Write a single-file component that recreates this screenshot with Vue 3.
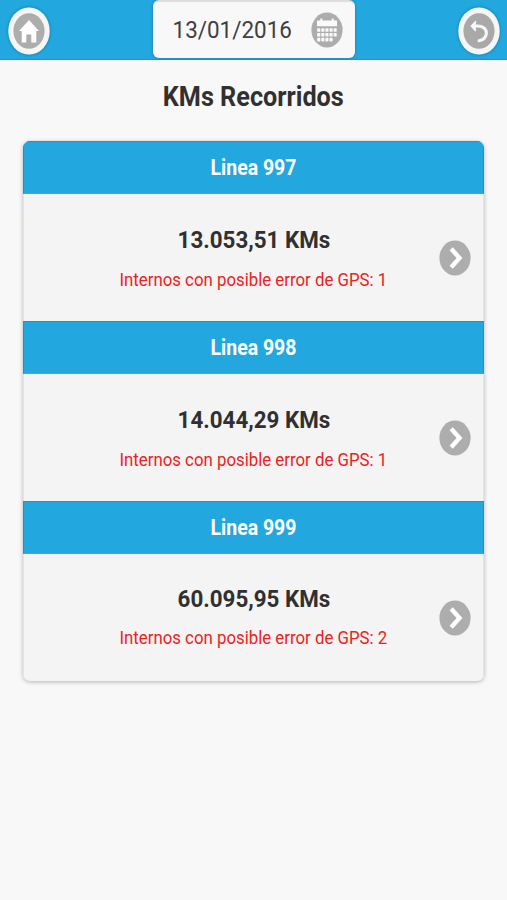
<template>
  <div class="page">
    <header class="top-bar">
      <button class="round-btn" aria-label="Inicio">
        <svg width="42" height="48" viewBox="0 0 42 48">
          <ellipse cx="21" cy="24" rx="20.7" ry="23.6" fill="#f6f6f6" />
          <ellipse cx="21" cy="24" rx="15.6" ry="17.8" fill="#adadad" />
          <path d="M21 13 L31 24 H28.3 V35.4 H23.3 V27.5 H18.3 V35.4 H13.7 V24 H11 Z" fill="#fff" />
        </svg>
      </button>
      <div class="date-box">
        <span class="date"><span class="narrow">{{ date }}</span></span>
        <svg width="32" height="36" viewBox="0 0 32 36">
          <ellipse cx="16" cy="18" rx="15.6" ry="17.5" fill="#adadad" />
          <path d="M6 8.5 H9.3 V6.5 H11.3 V8.5 H20.7 V6.5 H22.7 V8.5 H26 V14.3 H6 Z" fill="#fafafa" />
          <rect v-for="c in cells" :key="c.id" :x="c.x" :y="c.y" width="3.1" height="3.6" rx="0.6" fill="#fafafa" />
        </svg>
      </div>
      <button class="round-btn" aria-label="Volver">
        <svg width="42" height="48" viewBox="0 0 42 48">
          <ellipse cx="21" cy="24" rx="20.7" ry="23.6" fill="#f6f6f6" />
          <ellipse cx="21" cy="24" rx="15.6" ry="17.8" fill="#a9a9a9" />
          <path d="M15.5 19 H20 C25.5 19 29 22.5 28.3 27 C27.7 31 25 33 21 33.7" fill="none" stroke="#f8f8f8" stroke-width="3" stroke-linecap="round" />
          <path d="M18 14.2 L13.3 19 L17.8 24" fill="#f8f8f8" stroke="#f8f8f8" stroke-width="1.5" stroke-linejoin="round" />
        </svg>
      </button>
    </header>

    <h1 class="title"><span class="narrow">KMs Recorridos</span></h1>

    <div class="list">
      <section v-for="l in lineas" :key="l.numero" class="linea">
        <h2 class="linea-header"><span class="narrow">Linea {{ l.numero }}</span></h2>
        <div class="linea-body">
          <div class="info">
            <p class="kms"><span class="narrow">{{ l.kms }} KMs</span></p>
            <p class="error"><span class="narrow">Internos con posible error de GPS: {{ l.errores }}</span></p>
          </div>
          <svg class="arrow" width="32" height="36" viewBox="0 0 32 36">
            <ellipse cx="16" cy="18" rx="15.6" ry="17.5" fill="#adadad" />
            <path d="M12.2 8.8 L20.5 18 L12.2 27.2" fill="none" stroke="#fff" stroke-width="4.4" />
          </svg>
        </div>
      </section>
    </div>
  </div>
</template>

<script setup>
const date = '13/01/2016'

const lineas = [
  { numero: 997, kms: '13.053,51', errores: 1 },
  { numero: 998, kms: '14.044,29', errores: 1 },
  { numero: 999, kms: '60.095,95', errores: 2 }
]

// calendar grid: 5 columns, last row is one cell shorter
const cells = []
for (let row = 0; row < 3; row++) {
  for (let col = 0; col < (row === 2 ? 4 : 5); col++) {
    cells.push({ id: row * 5 + col, x: 6.2 + col * 4.1, y: 16.2 + row * 4.8 })
  }
}
</script>

<style>
body {
  margin: 0;
  background: #f8f8f8;
}
</style>

<style scoped>
.page {
  min-height: 900px;
  font-family: Roboto, 'Liberation Sans', sans-serif;
  color: #303030;
  background: #f8f8f8;
}

.top-bar {
  box-sizing: border-box;
  display: flex;
  justify-content: space-between;
  align-items: flex-start;
  height: 60px;
  padding: 0 7px 0 8px;
  background: #22a7df;
  border-bottom: 1px solid #2290d5;
}

.round-btn {
  display: block;
  margin-top: 7px;
  padding: 0;
  width: 42px;
  height: 48px;
  border: none;
  border-radius: 50%;
  background: none;
  box-shadow: 0 0 3px rgba(0, 0, 0, 0.28);
}

.round-btn svg { display: block; }

.date-box {
  box-sizing: border-box;
  display: flex;
  align-items: center;
  justify-content: space-between;
  width: 202px;
  height: 58px;
  padding: 0 12px 1px 19px;
  background: #f8f8f8;
  border-top: 2px solid #ddd;
  border-radius: 6px;
  box-shadow: 0 0 3px rgba(0, 0, 0, 0.3);
}

.date {
  width: 120px;
  font-size: 24.5px;
  color: #404040;
  display: flex;
  justify-content: center;
}

/* the type is set slightly condensed */
.narrow {
  display: inline-block;
  white-space: nowrap;
  transform: scaleX(0.885);
}

.date .narrow { transform: scaleX(0.915); }

.title {
  margin: 0;
  height: 81px;
  line-height: 73px;
  font-size: 28.5px;
  font-weight: 700;
  text-align: center;
}

.list {
  margin: 0 23px;
  border-radius: 7px;
  overflow: hidden;
  background: #f4f4f4;
  box-shadow: 0 1px 4px rgba(0, 0, 0, 0.28);
}

.linea-header {
  box-sizing: border-box;
  margin: 0;
  height: 53px;
  line-height: 51px;
  font-size: 22px;
  font-weight: 700;
  text-align: center;
  color: #fff;
  background: #22a7df;
  border: 1px solid #2290d5;
  border-bottom-color: #38acdf;
}

.linea-body {
  box-sizing: border-box;
  display: grid;
  grid-template-columns: 44px 1fr 44px;
  align-items: center;
  height: 127px;
  border: 1px solid #e4e4e4;
  border-width: 0 1px;
}

.info {
  grid-column: 2;
  padding-top: 5px;
  text-align: center;
}

.kms {
  margin: 0 0 10px;
  line-height: 30px;
  font-size: 24px;
  font-weight: 700;
}

.kms .narrow { transform: scaleX(0.932); }

.error {
  margin: 0;
  line-height: 30px;
  font-size: 19px;
  color: #f02020;
}

.linea:last-child .info { padding-top: 2px; }

.linea:last-child .kms { margin-bottom: 9px; }

.arrow {
  display: block;
}
</style>
